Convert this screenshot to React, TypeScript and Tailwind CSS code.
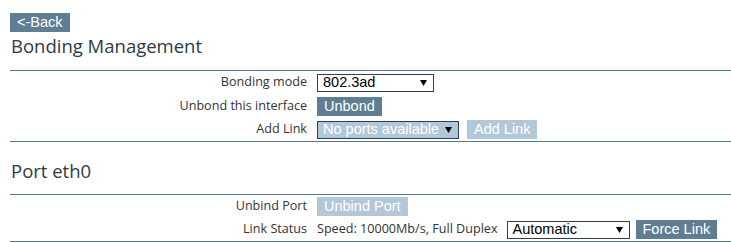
import React from "react";

const btnFont = { fontFamily: '"Liberation Sans", Arial, sans-serif' };

function Arrow() {
  return (
    <svg width="7" height="6" viewBox="0 0 7 6" className="shrink-0">
      <path d="M0 0 L7 0 L3.5 6 Z" fill="#000" />
    </svg>
  );
}

function FakeSelect({
  text,
  width,
  disabled,
}: {
  text: string;
  width: string;
  disabled?: boolean;
}) {
  return (
    <div
      className={`${width} flex h-[18px] items-center justify-between whitespace-nowrap border border-[#2f3f4d] pl-[5px] pr-[6px] text-[14.5px] leading-none ${
        disabled ? "bg-[#b2c8d8] text-white" : "bg-white text-black"
      }`}
      style={btnFont}
    >
      <span>{text}</span>
      <Arrow />
    </div>
  );
}

function Btn({ text, light }: { text: string; light?: boolean }) {
  return (
    <div
      className={`flex h-[19px] items-center whitespace-nowrap px-[7px] text-[14.5px] leading-none text-white ${
        light ? "bg-[#b2c8d8]" : "bg-[#5f7e94]"
      }`}
      style={btnFont}
    >
      {text}
    </div>
  );
}

function Row({
  label,
  h,
  children,
}: {
  label: string;
  h: string;
  children: React.ReactNode;
}) {
  return (
    <div className={`flex ${h} items-center`}>
      <div className="w-[297px] shrink-0 whitespace-nowrap text-right text-[12.6px] text-[#333]">
        {label}
      </div>
      <div className="flex items-center pl-[10px]">{children}</div>
    </div>
  );
}

export default function App() {
  return (
    <div
      className="w-[731px] h-[243px] overflow-hidden bg-white pl-[10px] pt-[13px]"
      style={{ fontFamily: '"Open Sans", "DejaVu Sans", sans-serif' }}
    >
      <div className="flex">
        <div
          className="flex h-[19px] items-center bg-[#5f7e94] px-[7px] text-[14.5px] leading-none text-white"
          style={btnFont}
        >
          &lt;-Back
        </div>
      </div>
      <h1 className="mb-[11px] pl-[1px] text-[18.5px] leading-[27px] text-[#2e3a48]">
        Bonding Management
      </h1>
      <div className="border-t border-[#5a7a8f]">
        <Row label="Bonding mode" h="h-[23px]">
          <FakeSelect text="802.3ad" width="w-[117px]" />
        </Row>
        <Row label="Unbond this interface" h="h-[24px]">
          <Btn text="Unbond" />
        </Row>
        <Row label="Add Link" h="h-[23px]">
          <div className="flex items-center gap-[8px]">
            <FakeSelect text="No ports available" width="w-[142px]" disabled />
            <Btn text="Add Link" light />
          </div>
        </Row>
      </div>
      <div className="border-t border-[#5a7a8f]" />
      <h2 className="mt-[15px] mb-[10px] pl-[1px] text-[18.5px] leading-[27px] text-[#2e3a48]">
        Port eth0
      </h2>
      <div className="border-t border-[#5a7a8f]">
        <Row label="Unbind Port" h="h-[23px]">
          <Btn text="Unbind Port" light />
        </Row>
        <Row label="Link Status" h="h-[23px]">
          <div className="flex items-center">
            <span className="whitespace-nowrap text-[12.6px] text-[#333]">
              Speed: 10000Mb/s, Full Duplex
            </span>
            <div className="ml-[9px] flex items-center gap-[6px]">
              <FakeSelect text="Automatic" width="w-[123px]" />
              <Btn text="Force Link" />
            </div>
          </div>
        </Row>
      </div>
      <div className="border-t border-[#5a7a8f]" />
    </div>
  );
}
